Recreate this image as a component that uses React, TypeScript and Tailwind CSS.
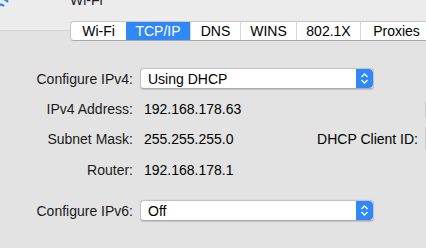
import React from "react";

const tabs = ["Wi-Fi", "TCP/IP", "DNS", "WINS", "802.1X", "Proxies"];
const tabWidths = ["w-[55px]", "w-[64px]", "w-[50px]", "w-[56px]", "w-[64px]", "w-[72px]"];

const Stepper = () => (
  <div className="flex h-full w-[17px] items-center justify-center rounded-r-[4px] bg-[#2f88f6]">
    <svg width="9" height="13" viewBox="0 0 9 13" fill="none">
      <path d="M1.5 5 L4.5 2 L7.5 5" stroke="white" strokeWidth="1.4" />
      <path d="M1.5 8 L4.5 11 L7.5 8" stroke="white" strokeWidth="1.4" />
    </svg>
  </div>
);

const Popup = ({ value }: { value: string }) => (
  <div className="flex h-[21px] w-[234px] items-center overflow-hidden rounded-[4px] border border-[#c3c3c3] border-b-[#acacac] bg-white shadow-[0_0.5px_1px_rgba(0,0,0,0.15)]">
    <span className="flex-1 pl-[7px] text-black">{value}</span>
    <Stepper />
  </div>
);

const Label = ({ children }: { children: React.ReactNode }) => (
  <div className="w-[133px] shrink-0 whitespace-nowrap text-right text-[#1a1a1a]">{children}</div>
);

export default function App() {
  return (
    <div className="h-[248px] w-[426px] overflow-hidden bg-[#e3e3e3] font-['Liberation_Sans',sans-serif] text-[14px] leading-[16px] text-black">
      {/* header */}
      <div className="flex h-[31px] items-start border-b border-[#d3d3d3] bg-[#ececec]">
        <svg className="-ml-[12px] -mt-[10px] shrink-0" width="26" height="22" viewBox="0 0 26 22" fill="none">
          <path d="M2 8 Q13 -2 24 8" stroke="#2a86f5" strokeWidth="2.2" />
          <path d="M6 12 Q13 5 20 12" stroke="#2a86f5" strokeWidth="2.2" />
          <path d="M10 16 Q13 13 16 16" stroke="#2a86f5" strokeWidth="2.2" />
        </svg>
        <span className="-mt-[8px] ml-[56px] text-[#222]">Wi-Fi</span>
      </div>

      {/* tabs */}
      <div className="relative -mt-[10px] ml-[70px] flex h-[20px] w-max rounded-l-[4px] border border-[#c6c6c6] border-b-[#a9a9a9] bg-white">
        {tabs.map((t, i) => (
          <div
            key={t}
            className={
              tabWidths[i] +
              " flex items-center justify-center whitespace-nowrap " +
              (i === 1
                ? "bg-[#2f88f6] text-white"
                : i === 0
                ? "rounded-l-[4px] text-black"
                : "border-l border-[#d6d6d6] text-black")
            }
          >
            {t}
          </div>
        ))}
      </div>

      {/* form */}
      <div className="mt-[27px] flex flex-col">
        <div className="flex h-[21px] items-center gap-[7px]">
          <Label>Configure IPv4:</Label>
          <Popup value="Using DHCP" />
        </div>
        <div className="mt-[10px] flex h-[20px] items-center gap-[11px]">
          <Label>IPv4 Address:</Label>
          <span className="w-[270px] shrink-0 whitespace-nowrap">192.168.178.63</span>
          <div className="h-[15px] w-[4px] shrink-0 border-l border-[#c8c8c8] bg-white" />
        </div>
        <div className="mt-[10px] flex h-[20px] items-center">
          <Label>Subnet Mask:</Label>
          <span className="w-[180px] shrink-0 pl-[11px] whitespace-nowrap">255.255.255.0</span>
          <span className="w-[105px] shrink-0 whitespace-nowrap text-right">DHCP Client ID:</span>
          <div className="ml-[7px] h-[22px] w-[4px] shrink-0 self-end border-l border-t border-[#c8c8c8] bg-white" />
        </div>
        <div className="mt-[11px] flex h-[20px] items-center gap-[11px]">
          <Label>Router:</Label>
          <span className="whitespace-nowrap">192.168.178.1</span>
        </div>
        <div className="mt-[20px] flex h-[21px] items-center gap-[7px]">
          <Label>Configure IPv6:</Label>
          <Popup value="Off" />
        </div>
      </div>
    </div>
  );
}
